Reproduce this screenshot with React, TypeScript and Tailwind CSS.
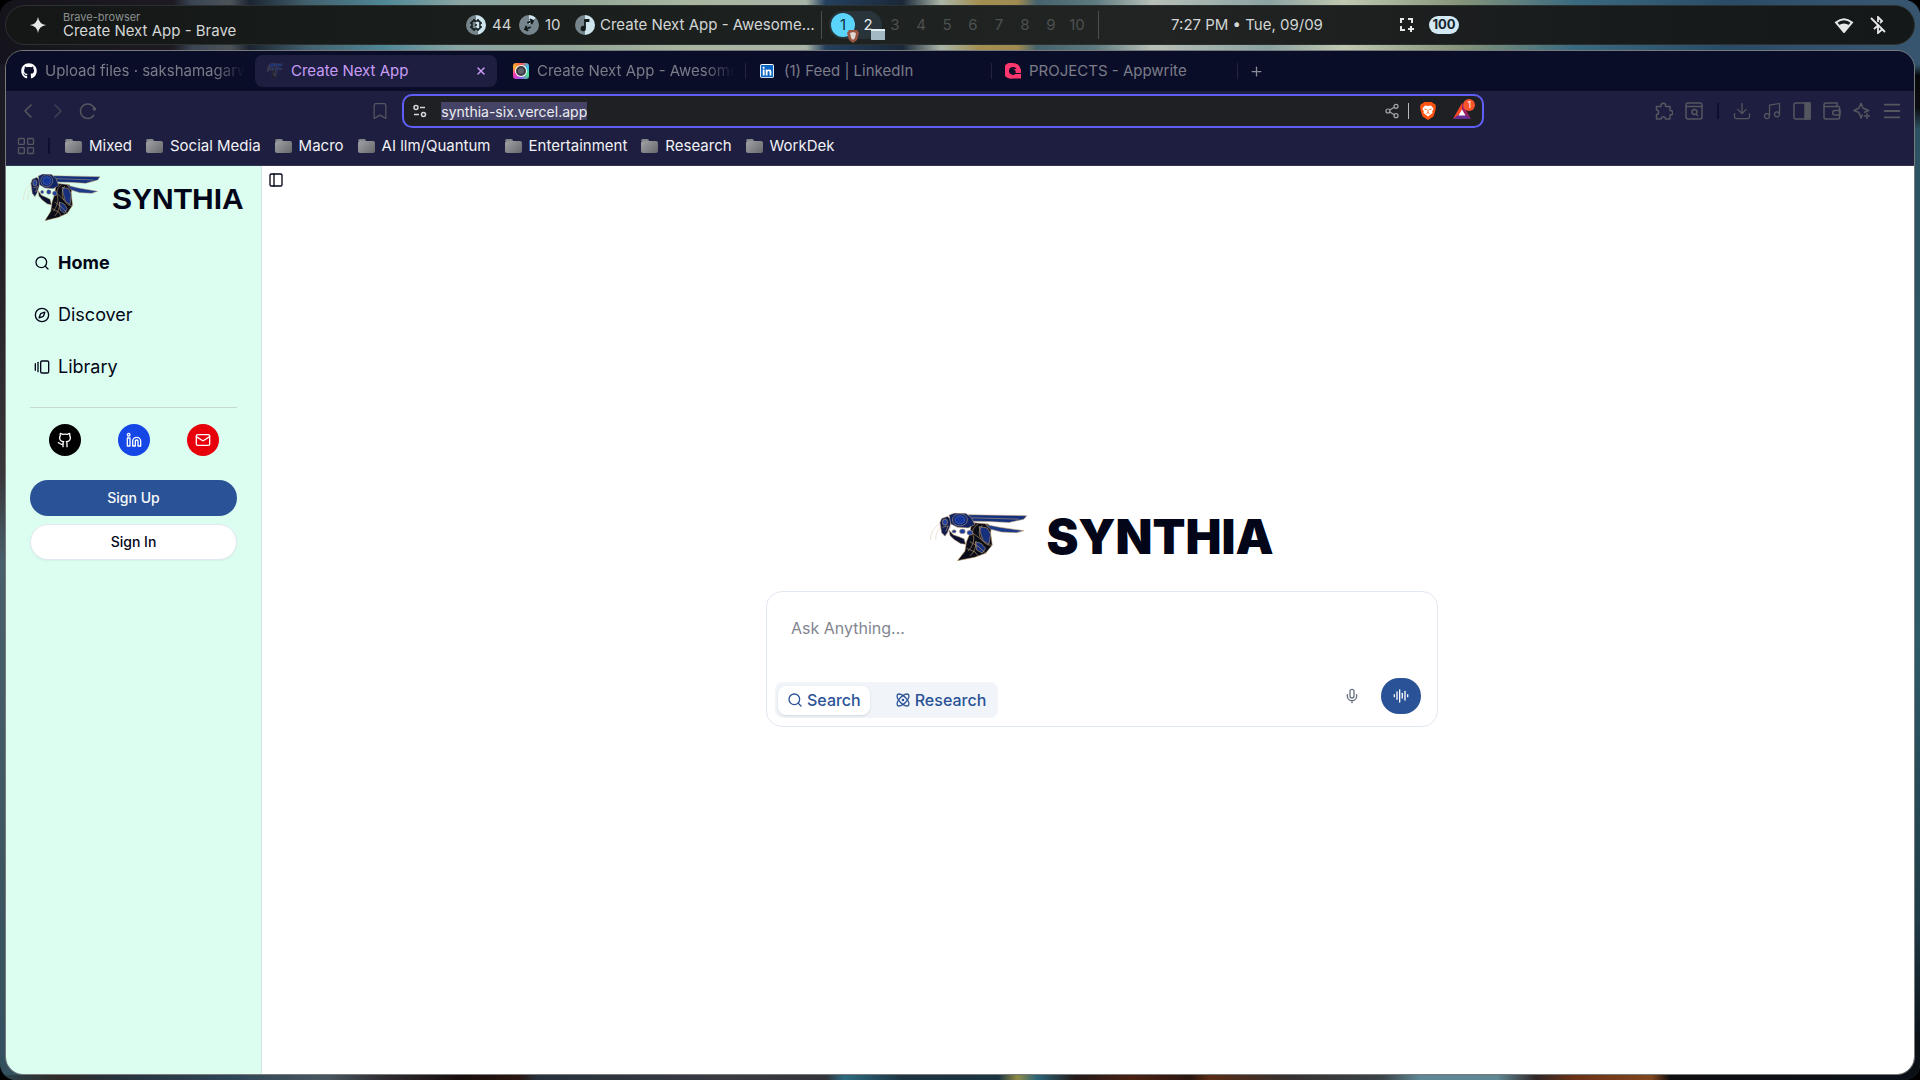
import type { ReactNode } from "react";
import {
  Atom,
  AudioLines,
  Bookmark,
  ChevronLeft,
  ChevronRight,
  Compass,
  Download,
  GalleryHorizontalEnd,
  Github,
  LayoutGrid,
  Linkedin,
  Mail,
  Menu,
  Mic,
  Music,
  PanelLeft,
  Plus,
  Search,
  Share2,
  X,
} from "lucide-react";
import { FaGithub, FaLinkedin } from "react-icons/fa";

function Wasp({ className }: { className: string }) {
  return (
    <svg viewBox="0 0 236 141" preserveAspectRatio="none" className={className} aria-hidden="true">
      <g fill="none" stroke="#e3d9bd" strokeWidth="2">
        <path d="M27 30C12 38 2 54 1 79" />
        <path d="M31 38C20 46 13 60 14 79" />
      </g>
      <g stroke="#c9a777" strokeWidth="1.5" strokeLinejoin="round">
        <path d="M100 28L140 32 148 42 146 58 150 94 134 118 108 130 66 140 84 112 88 84 96 60Z" fill="#0a0c18" />
        <path d="M118 40L138 44 146 62 142 92 128 82 122 60Z" fill="#16307c" />
        <path d="M110 84L124 90 134 104 126 118 112 108Z" fill="#16307c" />
        <path d="M92 5L233 8 226 18 190 28 140 25 92 24Z" fill="#12307e" />
        <path d="M134 34L168 42 226 52 208 58 172 56 146 48Z" fill="#1b3a8a" />
        <path d="M28 16L42 10 52 20 48 40 42 58 36 68 28 58 24 28Z" fill="#101c50" />
        <path d="M46 6L60 0 86 1 100 14 108 34 92 44 66 42 50 32Z" fill="#0f2365" />
        <path d="M46 50L56 64 70 70 82 76 86 92 74 90 58 78 48 66Z" fill="#0b1030" />
        <circle cx="72" cy="20" r="18" fill="#0d2474" />
        <circle cx="72" cy="20" r="12" fill="#16379a" stroke="#5d78bd" />
      </g>
      <g fill="none" stroke="#c9a777" strokeWidth="1.5">
        <path d="M100 14L214 18" />
        <path d="M116 32Q98 46 104 66T92 112" />
        <path d="M126 36Q112 58 124 78T150 94" />
        <path d="M104 60L124 78" />
        <path d="M96 84L118 100 134 118" />
        <path d="M88 104L108 114 116 126" />
        <path d="M110 84Q112 110 96 126" />
        <path d="M30 42L44 38 38 54" />
      </g>
      <g fill="#1f3f9e" stroke="#c9a777" strokeWidth="1.5">
        <ellipse cx="36" cy="27" rx="6" ry="9" />
        <circle cx="78" cy="54" r="7" />
        <circle cx="58" cy="54" r="5" />
        <circle cx="96" cy="58" r="7" />
      </g>
    </svg>
  );
}

function Wallpaper() {
  return (
    <div className="absolute inset-0 overflow-hidden rounded-2xl" aria-hidden="true">
      <div className="absolute inset-0 bg-[linear-gradient(180deg,#191824_0%,#1e1b22_20%,#332f33_38%,#3a373b_44%,#48606a_52%,#3f5862_75%,#33505f_100%)]" />
      <div className="absolute inset-y-0 right-0 w-1/2 bg-[linear-gradient(180deg,#385468_0%,#33556a_6%,#06080a_7%,#0b0d10_10%,#2c5363_12%,#2d5a68_60%,#1f3c48_85%,#0c1218_96%,#0a0f16_100%)]" />
      <div className="absolute inset-x-0 top-0 h-16 bg-[linear-gradient(90deg,#15141d_0%,#1d1a22_9%,#3a4555_10%,#4c5458_12%,#1b2431_13%,#42606e_16%,#4f8796_20%,#8aa6a4_24%,#94a697_30%,#a9b7a1_36%,#a7b3a6_42%,#24405e_43%,#1a2838_47%,#aab5a8_49%,#a38f52_51%,#a08a50_53%,#45636d_54%,#5d7a80_57%,#b8c0b8_60%,#8ba3a3_66%,#c0c8b0_70%,#86957a_76%,#3a6a80_82%,#294b66_90%,#385570_98%)]" />
      <div className="absolute inset-x-0 bottom-0 h-[5px] bg-[linear-gradient(90deg,#2b434d_0%,#2f2a27_3%,#27313c_6%,#2e4557_12%,#49565f_17%,#2f2c31_20%,#170d0b_24%,#2a1511_27%,#26313c_28%,#3a3a42_38%,#33333a_43%,#2c6a80_44%,#1d3340_47%,#1a3440_52%,#8f8a45_53%,#2b6478_54%,#241a18_56%,#4a2012_59%,#2a1610_62%,#5a2c14_63%,#35302f_67%,#3b4448_72%,#5f8896_74%,#5f8794_78%,#2f2626_80%,#6b3116_82%,#80461e_86%,#0e0e10_87%,#0b111a_100%)]" />
    </div>
  );
}

function Chip({ fill, children }: { fill: string; children: ReactNode }) {
  return (
    <span className={`flex size-5 items-center justify-center rounded-full text-[#10181a] ${fill}`}>{children}</span>
  );
}

function StatusBar() {
  const rest = ["3", "4", "5", "6", "7", "8", "9", "10"];
  return (
    <header className="relative flex h-10 items-center rounded-[20px] border border-[#2c302f] bg-[linear-gradient(90deg,#141716_0%,#1a1f1e_30%,#212423_60%,#181b1b_85%,#151819_100%)] text-[15px] text-[#d3d6d5]">
      <div className="flex w-[460px] items-center pl-6">
        <svg viewBox="0 0 16 16" className="size-4 fill-[#e6e8e8]" aria-hidden="true">
          <path d="M8 0Q9 7 16 8Q9 9 8 16Q7 9 0 8Q7 7 8 0Z" />
        </svg>
        <div className="ml-[17px] flex flex-col">
          <span className="text-[11px] leading-3 text-[#8c9190]">Brave-browser</span>
          <span className="text-[15px] leading-4">Create Next App - Brave</span>
        </div>
      </div>
      <div className="flex w-[355px] items-center">
        <Chip fill="bg-[conic-gradient(#cfe5ee_0_46%,#75858b_46%_100%)]">
          <svg viewBox="0 0 14 14" className="size-3.5" fill="none" stroke="currentColor" strokeWidth="1.500">
            <rect x="3" y="3" width="8" height="8" rx="1" />
            <path d="M5 1v2M9 1v2M5 11v2M9 11v2M1 5h2M1 9h2M11 5h2M11 9h2M6 7h2" />
          </svg>
        </Chip>
        <span className="ml-1.5 w-[27px]">44</span>
        <Chip fill="bg-[conic-gradient(#cfe5ee_0_12%,#75858b_12%_100%)]">
          <svg viewBox="0 0 16 16" className="size-3.5 -rotate-20" fill="none" stroke="currentColor" strokeWidth="2">
            <path d="M7 5H14M11 2l3 3-3 3M9 11H2M5 8l-3 3 3 3" />
          </svg>
        </Chip>
        <span className="ml-1.5 w-[30px]">10</span>
        <Chip fill="bg-[conic-gradient(#cfe5ee_0_50%,#75858b_50%_100%)]">
          <svg viewBox="0 0 16 16" className="size-3.5" fill="currentColor">
            <path d="M7 1h6v3.500H9V12a3 3 0 1 1-2-2.800Z" />
          </svg>
        </Chip>
        <span className="ml-[5px] whitespace-nowrap">Create Next App - Awesome…</span>
      </div>
      <div className="flex w-[278px] items-center border-x border-[#4a4e4d]">
        <div className="ml-[7px] flex h-7 w-[53px] items-center rounded-full bg-[#28343a] pl-0.5">
          <span className="relative flex h-6 w-6 items-center justify-center rounded-full bg-[#5ad4fb] text-[#10303c]">
            1
            <svg viewBox="0 0 12 14" className="absolute -right-1 -bottom-1.5 h-3.5 w-3" aria-hidden="true">
              <path d="M2 1h8l2 3-2 7-4 3-4-3L0 4Z" fill="#9a5540" />
              <path d="M3 4l3-1 3 1-1 5-2 2-2-2Z" fill="#e0d6d2" />
            </svg>
          </span>
          <span className="relative w-[26px] text-center text-[#e4eaec]">
            2
            <span className="absolute -right-1 -bottom-1 h-[11px] w-3.5 border-t-2 border-[#e3eef2] bg-[#a3bac4]" />
          </span>
        </div>
        <div className="flex">
          {rest.map((n) => (
            <span key={n} className="w-[26px] text-center text-[#4d5150]">
              {n}
            </span>
          ))}
        </div>
      </div>
      <div className="flex w-[296px] justify-center text-[15px]">7:27 PM • Tue, 09/09</div>
      <div className="ml-1 flex items-center gap-3.5">
        <svg viewBox="0 0 16 16" className="size-4" fill="none" stroke="#e6e8e8" strokeWidth="2" aria-hidden="true">
          <path d="M2 6V2h3M9 2h4v4M2 9v4h4M12 9v6M9 12h6" />
        </svg>
        <span className="flex h-[18px] w-[30px] items-center justify-center rounded-full bg-[#d2e8f2] text-[13px] font-bold text-[#17232a]">
          100
        </span>
      </div>
      <div className="mr-7 ml-auto flex items-center gap-4">
        <svg viewBox="0 0 20 16" className="h-4 w-5" aria-hidden="true">
          <path d="M2 5.500Q10-1 18 5.500L10 15Z" fill="none" stroke="#e6e8e8" strokeWidth="2" />
          <path d="M5 8Q10 5 15 8L10 15Z" fill="#e6e8e8" />
        </svg>
        <svg viewBox="0 0 16 18" className="h-[18px] w-4" fill="none" stroke="#e6e8e8" strokeWidth="1.800" aria-hidden="true">
          <path d="M1 2L15 16M4 13L8 9.500M8 6V1L12 5L10 7M8 9V17L12 13.500" />
        </svg>
      </div>
    </header>
  );
}

function Tabs() {
  const idle = "flex h-8 items-center whitespace-nowrap text-left text-[15px] text-[#7a7c88]";
  const fade = "flex-1 [mask-image:linear-gradient(90deg,#000_82%,transparent_97%)]";
  return (
    <nav aria-label="Tabs" className="flex h-10 items-center bg-[#0a0d28]">
      <button className={`${idle} w-[249px] pr-1 pl-[15px]`}>
        <FaGithub size={16} className="mr-2 shrink-0 text-white" />
        <span className={fade}>Upload files · sakshamagarw</span>
      </button>
      <button className="flex h-8 w-[242px] items-center rounded-lg bg-[#1e1f40] pr-2.5 pl-3 text-[15px] text-[#c79cf5]">
        <Wasp className="mr-2 h-4 w-4 shrink-0 opacity-80" />
        <span>Create Next App</span>
        <X size={12} strokeWidth={3} className="ml-auto" />
      </button>
      <button className={`${idle} w-[249px] pl-4`}>
        <span className="mr-2 flex size-4 shrink-0 items-center justify-center rounded-[3px] bg-[conic-gradient(#ff5a4d,#35c4f0,#4ee08a,#8a5cf5,#f531b5,#ffb02e,#ff5a4d)]">
          <span className="flex size-3 items-center justify-center rounded-full bg-white">
            <span className="size-2.5 rounded-full border-2 border-[#3a3a40] bg-[#5d6068]" />
          </span>
        </span>
        <span className={fade}>Create Next App - Awesome</span>
        <span className="ml-1 h-4 w-px bg-[#22243f]" />
      </button>
      <button className={`${idle} w-[246px] pl-[14px]`}>
        <span className="mr-2.5 size-3.5 shrink-0 rounded-[2px] bg-white">
          <FaLinkedin size={14} className="text-[#0a66c2]" />
        </span>
        <span className="flex-1">(1) Feed | LinkedIn</span>
        <span className="h-4 w-px bg-[#22243f]" />
      </button>
      <button className={`${idle} w-[246px] pl-[13px]`}>
        <svg viewBox="0 0 16 16" className="mr-2 size-4 shrink-0" aria-hidden="true">
          <path d="M8 0a8 8 0 1 0 0 15.500h8V11h-5.500A4 4 0 1 1 11.500 6H15.500A8 8 0 0 0 8 0Z" fill="#fd366e" />
          <path d="M8 6h8v4H10.500A3 3 0 0 0 8 6Z" fill="#fd366e" />
        </svg>
        <span className="flex-1">PROJECTS - Appwrite</span>
        <span className="h-4 w-px bg-[#22243f]" />
      </button>
      <button aria-label="New tab" className="flex h-8 w-9 items-center justify-center text-[#8a8c98]">
        <Plus size={15} />
      </button>
    </nav>
  );
}

function Tool({ label, children }: { label: string; children: ReactNode }) {
  return (
    <button aria-label={label} className="flex h-8 w-[30px] items-center justify-center text-[#55575f]">
      {children}
    </button>
  );
}

function Toolbar() {
  return (
    <div className="flex h-10 items-center bg-[#1e1f40]">
      <div className="flex flex-[396] items-center pl-[7px]">
        <Tool label="Back">
          <ChevronLeft size={24} strokeWidth={1.5} />
        </Tool>
        <Tool label="Forward">
          <ChevronRight size={24} strokeWidth={1.5} className="opacity-60" />
        </Tool>
        <Tool label="Reload">
          <svg viewBox="0 0 18 18" className="size-[18px]" fill="none" stroke="currentColor" strokeWidth="1.500">
            <path d="M15.500 6.500A7.300 7.300 0 1 0 15 13" />
            <circle cx="15.500" cy="7" r="1.800" fill="currentColor" stroke="none" />
          </svg>
        </Tool>
        <div className="mr-[7px] ml-auto">
          <Tool label="Bookmark this page">
            <Bookmark size={20} strokeWidth={1.5} />
          </Tool>
        </div>
      </div>
      <div className="flex h-[34px] w-[1082px] items-center rounded-[10px] border-2 border-[#5f5ff8] bg-[#1f2023] pr-[11px] pl-[9px]">
        <svg viewBox="0 0 14 14" className="size-3.5 shrink-0" fill="none" stroke="#d5d6d8" strokeWidth="1.500" aria-hidden="true">
          <circle cx="3" cy="3.500" r="2" />
          <path d="M7 3.500h5M1 10.500h5" />
          <circle cx="10.500" cy="10.500" r="2" />
        </svg>
        <input
          aria-label="Address"
          defaultValue="synthia-six.vercel.app"
          className="ml-[14px] h-[18px] bg-[#464466] text-[14px] text-[#eceef2] outline-none [field-sizing:content]"
        />
        <button aria-label="Share" className="ml-auto text-[#a5a6aa]">
          <Share2 size={16} strokeWidth={1.8} />
        </button>
        <span className="ml-2 h-4 w-px bg-[#b8b9bd]" />
        <button aria-label="Brave Shields" className="ml-[11px]">
          <svg viewBox="0 0 16 18" className="h-[18px] w-4">
            <path d="M4 0h8l1.500 1.700L15 1.700 16 5l-.600 1.500.300 1-2.200 7L8 18l-5.500-3.500-2.200-7 .300-1L0 5l1-3.300h1.500Z" fill="#fb5412" />
            <path d="M5 3.500 8 4l3-.500 2.500 3-1.300 3 .300 1.500-2.500 2L8 14.500 6 13l-2.500-2 .300-1.500-1.300-3Z" fill="#fff" />
            <path d="M4.500 7l2.200.7M11.500 7l-2.200.7M8 7.500v3l-1.500 1M8 10.500l1.500 1" stroke="#fb5412" strokeWidth=".9" fill="none" />
          </svg>
        </button>
        <button aria-label="Brave Rewards" className="relative ml-[17px]">
          <svg viewBox="0 0 18 16" className="h-4 w-[18px]">
            <path d="M9 0L0 16 9 10Z" fill="#ff4724" />
            <path d="M9 0L18 16 9 10Z" fill="#9e1f63" />
            <path d="M0 16H18L9 9Z" fill="#662d91" />
            <path d="M9 6.500L12.500 12.500H5.500Z" fill="#fff" />
          </svg>
          <span className="absolute -top-1 -right-1 flex size-3 items-center justify-center rounded-full bg-[#fb542b] text-[9px] text-white">
            1
          </span>
        </button>
      </div>
      <div className="flex flex-[430] items-center justify-end pr-[7px]">
        <Tool label="Extensions">
          <svg viewBox="0 0 18 18" className="size-[18px]" fill="none" stroke="currentColor" strokeWidth="1.500" strokeLinejoin="round">
            <path d="M1.500 4.500H6V3.500a2.300 2.300 0 0 1 4.600 0V4.500H15V8.500H15.500a2 2 0 0 1 0 4.500H15V17H10.500a2.200 2.200 0 0 0-4.400 0H1.500V12.500a2.200 2.200 0 0 0 0-4.400Z" />
          </svg>
        </Tool>
        <Tool label="Search tabs">
          <svg viewBox="0 0 18 18" className="size-[18px]" fill="none" stroke="currentColor" strokeWidth="1.500">
            <rect x="1" y="1" width="16" height="16" rx="2" />
            <path d="M1 4.500h16M11 12l2 2" />
            <circle cx="9.500" cy="10" r="2.500" />
          </svg>
        </Tool>
        <span className="mx-2 h-4 w-0.5 bg-[#0d0f30]" />
        <Tool label="Downloads">
          <Download size={20} strokeWidth={1.5} />
        </Tool>
        <Tool label="Media">
          <Music size={20} strokeWidth={1.5} />
        </Tool>
        <Tool label="Sidebar">
          <svg viewBox="0 0 18 18" className="size-[18px]" fill="none" stroke="currentColor" strokeWidth="1.500">
            <rect x="1" y="1" width="16" height="16" rx="1.500" />
            <path d="M12 1h5v16h-5Z" fill="currentColor" />
          </svg>
        </Tool>
        <Tool label="Wallet">
          <svg viewBox="0 0 18 18" className="size-[18px]" fill="none" stroke="currentColor" strokeWidth="1.500">
            <path d="M16.500 6V15.500a1.500 1.500 0 0 1-1.500 1.500H2.500A1.500 1.500 0 0 1 1 15.500V3A2 2 0 0 1 3 1H14V4.500M1 4.500H15.500A1 1 0 0 1 16.500 6" />
            <path d="M17 8.500H12a2.300 2.300 0 0 0 0 4.600H17Z" />
          </svg>
        </Tool>
        <Tool label="Leo AI">
          <svg viewBox="0 0 18 18" className="size-[18px]" fill="none" stroke="currentColor" strokeWidth="1.500" strokeLinejoin="round">
            <path d="M8 1L9.800 6 15.500 8.500 11 10.500M8 1L6 6 1 8.500 6 10.500 8 16 9.500 12.500M14 11v6M11 14h6" />
          </svg>
        </Tool>
        <Tool label="Menu">
          <Menu size={22} strokeWidth={2} />
        </Tool>
      </div>
    </div>
  );
}

function Bookmarks() {
  const folders = ["Mixed", "Social Media", "Macro", "AI llm/Quantum", "Entertainment", "Research", "WorkDek"];
  return (
    <nav aria-label="Bookmarks" className="flex h-[35px] items-center border-b border-[#34354f] bg-[#1e1f40] pb-1 pl-2.5 text-[15px] text-[#f1f2f6]">
      <LayoutGrid size={20} strokeWidth={1.6} className="text-[#55575f]" />
      <span className="mr-[15px] ml-3 h-4 w-0.5 bg-[#0d0f30]" />
      <div className="flex gap-3.5">
        {folders.map((f) => (
          <a key={f} href="#" className="flex items-center gap-[7px]">
            <span className="flex flex-col">
              <span className="h-0.5 w-2 rounded-t-sm bg-[#85868a]" />
              <span className="h-3 w-[17px] rounded-[2px] bg-[linear-gradient(135deg,#a0a1a6,#68696c)]" />
            </span>
            {f}
          </a>
        ))}
      </div>
    </nav>
  );
}

function Sidebar() {
  return (
    <aside className="flex w-64 shrink-0 flex-col border-r border-[#d5e3ec] bg-[#dcfef0] text-[#020618]">
      <div className="flex h-[62px] items-center pl-[17px]">
        <Wasp className="h-[47px] w-[78px]" />
        <h2 className="ml-[11px] pt-1 font-['Liberation_Sans',sans-serif] text-[30px] leading-9 font-bold">SYNTHIA</h2>
      </div>
      <nav className="mt-[9px] flex flex-col px-6 text-lg">
        <a href="#" className="flex h-[52px] items-center gap-2 pl-1 font-bold">
          <Search size={16} />
          Home
        </a>
        <a href="#" className="flex h-[52px] items-center gap-2 pl-1">
          <Compass size={16} />
          Discover
        </a>
        <a href="#" className="flex h-[52px] items-center gap-2 pl-1">
          <GalleryHorizontalEnd size={16} />
          Library
        </a>
      </nav>
      <hr className="mx-6 mt-3.5 border-[#c6d8d4]" />
      <div className="mx-6 mt-4 flex justify-around text-white">
        <a href="#" aria-label="GitHub" className="flex size-8 items-center justify-center rounded-full bg-black">
          <Github size={16} />
        </a>
        <a href="#" aria-label="LinkedIn" className="flex size-8 items-center justify-center rounded-full bg-[#1447e6]">
          <Linkedin size={16} />
        </a>
        <a href="#" aria-label="Email" className="flex size-8 items-center justify-center rounded-full bg-[#e7000b]">
          <Mail size={16} />
        </a>
      </div>
      <div className="mx-6 mt-6 flex flex-col gap-2 text-sm font-medium">
        <button className="h-9 rounded-full bg-[#2a5296] text-[#f8fafc]">Sign Up</button>
        <button className="h-9 rounded-full border border-[#e2e8f0] bg-white shadow-xs">Sign In</button>
      </div>
    </aside>
  );
}

function Main() {
  return (
    <main className="flex flex-1 bg-white text-[#020618]">
      <button aria-label="Toggle sidebar" className="flex size-7 items-center justify-center">
        <PanelLeft size={16} />
      </button>
      <div className="flex flex-1 flex-col items-center justify-center">
        <div className="flex h-12 items-center gap-[18px]">
          <Wasp className="h-12 w-[98px]" />
          <h1 className="text-5xl leading-12 font-black">SYNTHIA</h1>
        </div>
        <form className="mt-[30px] flex w-full max-w-2xl flex-col rounded-2xl border border-[#e2e8f0] pb-2">
          <textarea
            aria-label="Ask anything"
            placeholder="Ask Anything..."
            rows={1}
            className="mt-4 h-[74px] resize-none px-6 py-2 text-base outline-none placeholder:text-[#83868f]"
          />
          <div className="flex h-9 items-center pr-4 pl-2">
            <div className="flex h-9 w-[223px] items-center rounded-lg bg-[#f1f5f9] p-[3px] font-medium text-[#2a5296]">
              <button type="button" className="flex h-[29px] items-center gap-1 rounded-lg bg-white px-[9px] shadow-sm">
                <Search size={16} />
                Search
              </button>
              <button type="button" className="ml-4 flex h-[29px] items-center gap-1 px-[9px]">
                <Atom size={16} />
                Research
              </button>
            </div>
            <button type="button" aria-label="Dictate" className="-mt-2 mr-[21px] ml-auto text-[#6a7282]">
              <Mic size={16} />
            </button>
            <button type="button" aria-label="Voice mode" className="-mt-2 flex h-9 w-10 items-center justify-center rounded-full bg-[#2a5296] text-white">
              <AudioLines size={16} />
            </button>
          </div>
        </form>
      </div>
    </main>
  );
}

export default function App() {
  return (
    <div className="relative flex h-screen flex-col gap-[5px] bg-black p-[5px] font-['Inter',sans-serif]">
      <Wallpaper />
      <StatusBar />
      <div className="relative flex min-h-0 flex-1 flex-col overflow-hidden rounded-[18px] border border-[#77797a]">
        <Tabs />
        <Toolbar />
        <Bookmarks />
        <div className="flex min-h-0 flex-1">
          <Sidebar />
          <Main />
        </div>
      </div>
    </div>
  );
}
